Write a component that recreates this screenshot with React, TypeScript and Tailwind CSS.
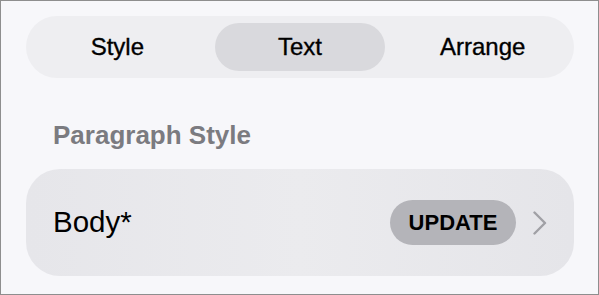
import React from "react";

export default function App() {
  return (
    <div
      className="w-[599px] h-[295px] bg-[#f7f7fa] border border-[#8e8e8e] box-border overflow-hidden"
      style={{ fontFamily: "'Liberation Sans', Arial, sans-serif" }}
    >
      <div className="pl-[25px] pr-[24px] pt-[15px]">
        <div className="h-[62px] rounded-full bg-[#eeeef1] grid grid-cols-3 items-center">
          <div className="h-[48px] flex items-center justify-center text-[24px] text-black [-webkit-text-stroke:0.35px_black]">
            Style
          </div>
          <div className="mx-[6px] h-[48px] rounded-full bg-[#d9d9dd] flex items-center justify-center text-[24px] text-black [-webkit-text-stroke:0.35px_black]">
            Text
          </div>
          <div className="h-[48px] flex items-center justify-center text-[24px] text-black [-webkit-text-stroke:0.35px_black]">
            Arrange
          </div>
        </div>
        <div className="pl-[27px] pt-[44px] h-[91px] text-[26px] font-bold text-[#7b7b80] leading-none">
          Paragraph Style
        </div>
        <div className="h-[107px] rounded-[34px] bg-gradient-to-r from-[#e6e6ea] via-[#ebebee] to-[#e5e5e9] flex items-center pl-[27px] pr-[26px]">
          <div className="flex-1 text-[29.5px] text-black">Body*</div>
          <div className="h-[45px] w-[126px] rounded-full bg-[#b4b4b9] flex items-center justify-center text-[22px] font-bold text-black">
            UPDATE
          </div>
          <svg className="ml-[16px]" width="16" height="24" viewBox="0 0 16 24" fill="none">
            <path d="M2.5 1.5 L13 12 L2.5 22.5" stroke="#a0a0a5" strokeWidth="2.4" strokeLinecap="round" strokeLinejoin="round" />
          </svg>
        </div>
      </div>
    </div>
  );
}
